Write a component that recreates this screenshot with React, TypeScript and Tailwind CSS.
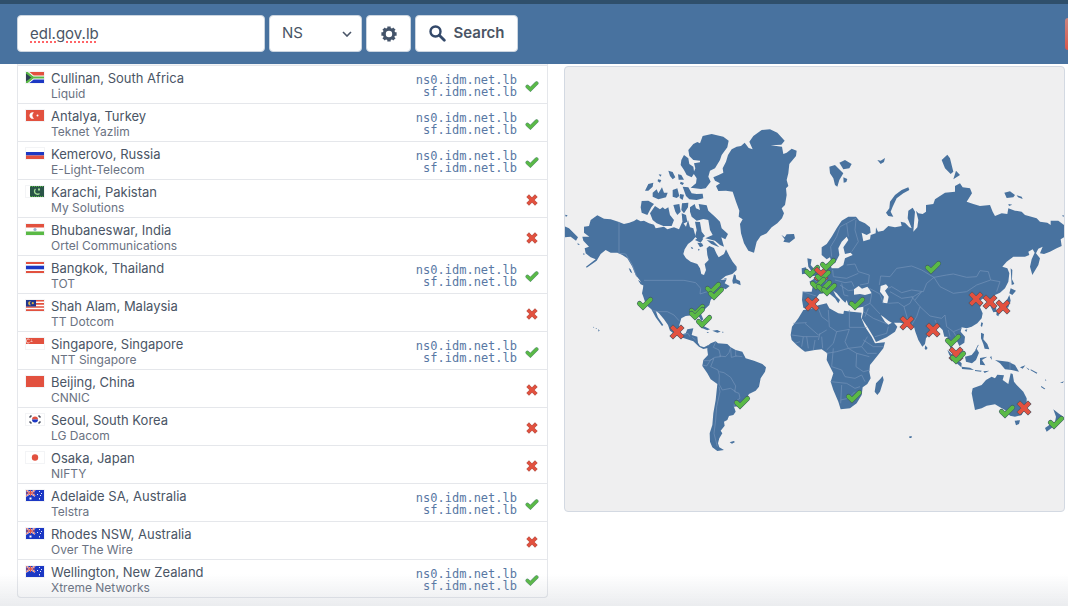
import { ReactNode } from "react";
import { clsx } from "clsx";

interface Server {
  place: string;
  provider: string;
  flag: string;
  ok: boolean;
}

const servers: Server[] = [
  { place: "Cullinan, South Africa", provider: "Liquid", flag: "za", ok: true },
  { place: "Antalya, Turkey", provider: "Teknet Yazlim", flag: "tr", ok: true },
  { place: "Kemerovo, Russia", provider: "E-Light-Telecom", flag: "ru", ok: true },
  { place: "Karachi, Pakistan", provider: "My Solutions", flag: "pk", ok: false },
  { place: "Bhubaneswar, India", provider: "Ortel Communications", flag: "in", ok: false },
  { place: "Bangkok, Thailand", provider: "TOT", flag: "th", ok: true },
  { place: "Shah Alam, Malaysia", provider: "TT Dotcom", flag: "my", ok: false },
  { place: "Singapore, Singapore", provider: "NTT Singapore", flag: "sg", ok: true },
  { place: "Beijing, China", provider: "CNNIC", flag: "cn", ok: false },
  { place: "Seoul, South Korea", provider: "LG Dacom", flag: "kr", ok: false },
  { place: "Osaka, Japan", provider: "NIFTY", flag: "jp", ok: false },
  { place: "Adelaide SA, Australia", provider: "Telstra", flag: "au", ok: true },
  { place: "Rhodes NSW, Australia", provider: "Over The Wire", flag: "au", ok: false },
  { place: "Wellington, New Zealand", provider: "Xtreme Networks", flag: "nz", ok: true },
];

// x, y, resolved
const markers: [number, number, boolean][] = [
  [645, 303, true],
  [713, 288, true],
  [716, 293, true],
  [697, 310, true],
  [697, 313, true],
  [704, 321, true],
  [677, 332, false],
  [742, 402, true],
  [812, 271, true],
  [821, 274, false],
  [828, 264, true],
  [823, 276, true],
  [818, 283, true],
  [824, 286, true],
  [829, 289, true],
  [812, 304, false],
  [857, 303, true],
  [854, 396, true],
  [933, 267, true],
  [976, 299, false],
  [990, 302, false],
  [1003, 307, false],
  [907, 323, false],
  [933, 330, false],
  [953, 340, true],
  [956, 354, false],
  [958, 357, true],
  [1007, 411, true],
  [1024, 408, false],
  [1056, 422, true],
];

const RED = "#e2513f";
const BLUE = "#1c38c4";
const GREEN = "#5ab946";

const unionJack = (
  <>
    <path d="M0 0L9 6M9 0L0 6" stroke="#fff" strokeWidth="1.6" />
    <path d="M0 0L9 6M9 0L0 6M4.5 0V6M0 3H9" stroke={RED} strokeWidth="0.9" />
  </>
);

const southernCross = (
  <g fill="#e8ecf8">
    <rect x="13" y="1" width="1" height="1" />
    <rect x="11" y="4" width="1" height="1" />
    <rect x="15" y="3" width="1" height="1" />
    <rect x="13" y="8" width="1" height="1.5" />
    <rect x="14" y="5" width="1" height="1" />
  </g>
);

const flags: Record<string, ReactNode> = {
  za: (
    <>
      <rect width="18" height="5" fill={RED} />
      <rect y="6.5" width="18" height="4.5" fill={BLUE} />
      <path d="M0 0L7 5.5H18M0 11L7 5.5" stroke="#fff" strokeWidth="4" fill="none" />
      <path d="M0 0V11L6 5.5Z" fill="#2f3f55" />
      <path d="M0 0L7 5.5H18M0 11L7 5.5" stroke={GREEN} strokeWidth="2.2" fill="none" />
    </>
  ),
  tr: (
    <>
      <rect width="18" height="11" fill={RED} />
      <path d="M8 2.6A3.2 3.2 0 1 0 8 8.4A3.4 3.4 0 0 1 8 2.6Z" fill="#fff" />
      <circle cx="11.5" cy="5.5" r="1" fill="#fff" />
    </>
  ),
  ru: (
    <>
      <rect y="4" width="18" height="3.5" fill={BLUE} />
      <rect y="7.5" width="18" height="3.5" fill={RED} />
    </>
  ),
  pk: (
    <>
      <rect x="4" width="14" height="11" fill="#2a5548" />
      <path d="M4 .5H18M4 10.5H18" stroke={GREEN} strokeDasharray="1 1" />
      <path d="M9.5 3A3 3 0 1 0 13.5 7.5" fill="none" stroke="#a5dc98" strokeWidth="1.3" />
      <rect x="12" y="2.5" width="2" height="2" fill="#a5dc98" />
    </>
  ),
  in: (
    <>
      <rect width="18" height="3.5" fill={RED} />
      <rect y="7.5" width="18" height="3.5" fill={GREEN} />
      <circle cx="9" cy="5.5" r="1.6" fill="#9fb0d0" />
    </>
  ),
  th: (
    <>
      <rect width="18" height="2" fill={RED} />
      <rect y="3.7" width="18" height="3.6" fill={BLUE} />
      <rect y="9" width="18" height="2" fill={RED} />
    </>
  ),
  my: (
    <>
      <path d="M0 .8H18M0 3.9H18M0 7H18M0 10.1H18" stroke={RED} strokeWidth="1.6" />
      <rect width="10" height="6.5" fill="#22378f" />
      <path d="M5 1.3A2.1 2.1 0 1 0 5 5.2A2.3 2.3 0 0 1 5 1.3Z" fill="#d8b04a" />
      <circle cx="6.8" cy="3.2" r="1.1" fill="#d8b04a" />
    </>
  ),
  sg: (
    <>
      <rect width="18" height="6" fill={RED} />
      <path d="M3.5 1.5A2 2 0 1 0 3.5 4.5" stroke="#fff" strokeWidth="0.7" fill="none" />
      <path d="M5 2H6M4.5 3.5H6.5" stroke="#fff" strokeWidth="0.6" />
    </>
  ),
  cn: <rect width="18" height="11" fill={RED} />,
  kr: (
    <>
      <path d="M6 5.5A3 3 0 0 1 12 5.5Z" fill={RED} />
      <path d="M6 5.5A3 3 0 0 0 12 5.5Z" fill={BLUE} />
      <path d="M3.5 3.5L5.5 1.5M12.5 1.5L14.5 3.5M3.5 7.5L5.5 9.5M12.5 9.5L14.5 7.5" stroke="#4a5060" strokeWidth="1.6" />
    </>
  ),
  jp: <circle cx="9" cy="5.5" r="3.2" fill={RED} />,
  au: (
    <>
      <rect width="18" height="11" fill={BLUE} />
      {unionJack}
      {southernCross}
      <rect x="3.5" y="7.5" width="2" height="2" fill="#fff" />
    </>
  ),
  nz: (
    <>
      <rect width="18" height="11" fill={BLUE} />
      {unionJack}
      {southernCross}
    </>
  ),
};

function Flag({ code }: { code: string }) {
  return (
    <svg viewBox="0 0 18 11" className="block h-[11px] w-[18px] bg-white outline outline-gray-100" aria-hidden="true">
      {flags[code]}
    </svg>
  );
}

function Mark({ ok }: { ok: boolean }) {
  const d = ok ? "M-5.5 0.5L-2 4L5.5 -3.5" : "M-4 -4L4 4M4 -4L-4 4";
  return (
    <g fill="none" strokeLinecap={ok ? "round" : "square"}>
      <path d={d} stroke="#3d5566" strokeWidth="5" />
      <path d={d} stroke={ok ? GREEN : RED} strokeWidth="4" />
    </g>
  );
}

function StatusIcon({ ok }: { ok: boolean }) {
  const d = ok ? "M-4.6 0.6L-1.6 3.4L4.6 -2.8" : "M-3 -3L3 3M3 -3L-3 3";
  return (
    <svg viewBox="-7 -6 14 12" className="block h-3 w-3.5" role="img" aria-label={ok ? "Resolved" : "Failed"}>
      <g fill="none" strokeLinecap={ok ? "round" : "square"}>
        <path d={d} stroke={ok ? "#5c8a7c" : "#b0594f"} strokeWidth="3.8" />
        <path d={d} stroke={ok ? GREEN : RED} strokeWidth="3" />
      </g>
    </svg>
  );
}

function WorldMap() {
  return (
    <svg viewBox="565 67 499 444" className="block w-full" role="img" aria-label="Propagation map">
      {/* Americas */}
      <g transform="translate(564 120) scale(0.33333)" fill="#48729f">
        <path d="M60 320L75 318L80 300L100 286L120 296L140 298L165 306L180 312L196 308L210 303L218 298L230 304L240 302L255 310L270 314L275 325L300 320L310 328L330 322L345 328L355 305L366 320L372 300L378 322L388 325L395 350L385 362L372 372L362 388L358 402L366 415L380 425L400 432L408 445L412 462L420 465L426 450L422 432L434 420L430 405L428 385L436 378L450 384L457 400L464 412L480 402L486 388L496 408L506 425L518 440L518 450L505 462L485 468L470 480L488 478L482 490L497 498L485 508L475 503L466 515L452 525L440 540L436 555L420 570L410 580L418 598L412 603L404 588L385 586L365 588L352 595L346 615L345 632L355 643L365 640L370 628L388 625L383 645L400 650L402 668L408 678L420 682L432 676L432 684L418 687L405 680L388 664L365 656L340 648L318 632L312 615L300 598L285 580L275 572L282 592L298 615L294 618L275 592L262 568L250 558L244 548L238 530L234 520L237 505L238 495L225 478L215 465L205 440L190 415L175 405L160 398L140 398L125 390L110 402L98 422L68 443L66 440L95 418L80 412L65 400L62 385L75 380L58 362L55 350L76 350L60 338Z" />
        <path d="M0 318L15 325L30 340L42 352L36 362L20 350L0 352ZM3 284L11 286L6 291ZM40 370l8 3l-6 2zM222 480l14 8l4 9l-10 -4zM194 444l6 4l5 12l-6 -4zM57 400l6 2l-4 3z" />
        <path d="M505 482L510 463L515 466L517 478L528 483L530 496L516 490L507 491ZM478 476l12 -2l-6 4zM380 380l8 4l-4 4zM400 368l14 2l4 8l-10 4zM402 386l6 3l-5 3z" />
        <g transform="translate(228 0)">
          <path d="M220 172L236 165L250 158L248 145L258 125L264 105L275 88L290 80L303 78L314 68L326 84L338 88L328 65L340 48L365 30L390 28L412 38L434 62L424 74L392 76L426 80L430 102L440 98L455 86L470 92L468 108L448 132L445 160L440 180L445 198L438 205L440 225L435 255L425 265L432 280L426 295L412 310L395 322L380 340L362 348L350 365L342 398L325 392L312 370L303 340L300 312L308 298L296 290L298 272L288 245L278 215L258 212L235 213L228 198L240 190L225 182Z" />
          <path d="M145 90L160 72L172 66L180 70L188 48L215 42L250 50L266 62L262 82L245 105L240 120L225 145L210 152L205 170L212 185L197 205L183 207L152 203L168 190L170 175L160 160L166 145L162 130L180 127L180 122L160 120L148 108Z" />
          <path d="M132 105L145 115L148 132L160 140L163 160L155 172L140 165L132 150L122 135L124 120Z" />
          <path d="M128 200L145 202L155 220L170 222L188 221L190 235L170 240L148 238L138 228ZM98 210L112 205L118 228L110 234L98 230ZM38 218L50 208L55 220L66 202L72 218L83 218L78 232L55 238L38 230ZM15 212L25 192L40 188L38 200L25 212ZM85 152L98 156L106 172L98 178L90 168ZM114 163l10 2l8 14l-16 0zM56 163l9 1l-4 6zM54 178l10 2l-4 8l-7 -4zM120 222l12 2l-4 16l-9 -6zM122 185l10 4l-4 6l-8 -4z" />
          <path d="M5 243L25 242L42 252L34 262L22 285L5 278L2 262ZM30 280L45 258L60 268L68 262L75 268L85 262L90 285L102 300L95 318L70 318L50 310L38 300ZM100 255L118 252L122 275L112 285L106 275ZM126 250L145 248L144 262L132 280L124 270ZM125 280L138 285L142 305L128 312Z" />
          <path d="M150 262L164 252L168 265L180 270L176 252L200 256L205 272L225 290L240 305L245 325L264 342L256 358L244 352L252 380L240 375L225 362L196 355L218 345L210 330L205 300L190 297L170 302L155 290L150 275ZM165 305L180 306L185 335L195 348L178 362L165 350L170 330ZM165 360L180 350L190 356L182 368ZM200 360L220 364L238 382L214 372Z" />
          <path d="M424 344L434 352L440 343L462 342L465 355L448 368L430 365L434 358Z" />
        </g>
        <g transform="translate(0 420)">
          <path d="M430 258L440 250L455 244L462 250L490 252L500 262L515 270L535 275L545 295L570 302L595 312L606 322L603 335L590 355L585 380L575 392L555 402L545 420L530 438L510 440L515 455L508 465L495 468L490 480L480 485L482 497L470 512L475 520L466 535L462 550L466 562L480 570L460 573L445 562L438 545L437 520L445 495L448 460L455 420L460 372L440 358L430 340L415 318L418 300L432 285L430 270Z" />
          <path d="M405 197L420 199L438 208L430 211L412 203ZM445 212l15 -2l10 5l-10 3zM474 215l6 1l-5 2zM428 216l8 1l-6 2zM497 547l12 -4l4 3l-9 5zM87 200l4 2l-3 1zM95 204l5 2l-4 1zM102 208l5 3l-3 4z" />
        </g>
        <g fill="none" stroke="#7694ba" strokeWidth="2">
          <path d="M165 306V400L185 402L205 435L218 470M240 481H360L395 488L410 505L408 522L430 515L448 500L470 485" />
          <path d="M265 572L285 575L310 575L330 585L345 602M355 645L372 640L378 650M385 652L395 660" />
          <path d="M455 666L448 682L465 690L470 710L452 712L440 720M465 708L485 710L495 698L500 682M418 722L435 722L450 715M450 715L440 740L462 750L466 765L465 792L475 810L500 805L515 815M466 755L480 758L500 772L515 798L512 815L525 820L528 835L512 845L510 860M465 800L468 815L458 860L455 900L450 940L460 980M515 690L515 708L535 710M500 685L502 712L518 708M415 735L428 738L440 720" />
        </g>
      </g>

      {/* Europe, Asia, Africa, Oceania */}
      <g transform="translate(780 140) scale(0.33333)" fill="#48729f">
        <path d="M125 345L125 322L140 312L155 290L170 265L185 242L205 230L228 230L238 242L255 250L270 262L272 278L260 285L245 278L250 304L270 298L272 285L287 280L288 262L294 275L310 272L325 258L345 262L365 258L362 245L375 248L388 262L395 265L383 235L385 212L398 203L405 215L402 250L400 275L412 262L415 240L408 212L415 220L428 222L438 215L438 195L460 192L465 178L495 158L525 155L525 138L540 130L548 142L570 145L576 160L560 185L580 192L600 198L630 195L638 215L645 228L665 220L682 222L685 205L705 212L725 215L735 225L770 235L780 245L802 248L812 255L812 242L835 242L852 255L852 292L842 298L845 318L830 325L810 335L792 342L780 340L788 320L775 326L768 340L780 355L775 375L757 405L750 380L755 358L764 338L758 328L745 335L748 345L735 350L700 350L680 365L667 380L682 385L688 400L685 425L675 445L660 458L645 465L635 480L648 500L650 515L640 517L632 500L622 482L610 475L600 482L592 480L595 492L606 492L600 502L608 520L605 535L592 550L575 560L560 565L545 562L542 575L555 590L553 608L538 618L532 605L520 595L512 605L515 622L530 640L532 655L515 635L508 615L502 590L493 590L488 570L478 560L465 565L450 580L438 595L435 612L427 620L415 600L406 575L402 560L390 555L360 548L335 548L325 542L310 530L302 525L315 545L325 554L340 546L352 560L345 575L320 592L288 606L280 590L262 560L245 535L250 515L250 500L225 505L205 495L200 480L205 470L196 488L185 478L170 460L160 452L168 468L180 480L175 490L165 475L145 458L130 460L118 462L108 475L106 498L85 508L70 503L66 480L68 455L95 455L98 440L88 425L105 415L120 405L135 390L140 370L150 372L155 385L175 385L190 375L195 355L218 345L212 338L195 342L190 322L205 300L200 290L185 305L175 325L178 345L165 370L155 368L150 352L140 358Z" />
        <path fill="#efeff0" d="M222 448L236 438L246 446L262 440L268 448L275 460L255 465L240 462L222 464ZM302 438L318 433L325 441L315 452L326 470L322 490L308 488L312 470L300 455Z" />
        <path d="M82 355L95 358L92 375L105 390L118 405L88 410L96 396L85 380ZM65 385L78 382L82 400L66 403ZM148 80L165 75L180 90L190 100L178 120L172 140L165 135L160 115L150 100ZM178 68L195 60L215 72L208 85L190 88ZM190 112l12 5l-3 9l-8 2zM292 60L302 62L315 54L312 66L302 72ZM385 142L388 150L370 160L350 175L338 200L332 215L340 230L325 228L318 218L328 205L330 185L345 165L365 150Z" />
        <g transform="translate(330 30)">
          <path d="M155 30L172 14L180 25L190 65L182 72L165 55ZM198 62L210 75L190 88ZM343 128L360 124L375 135L370 142L350 144ZM380 136l15 4l3 7l-14 -5zM355 162l12 2l-10 4zM516 197l5 -2l0 6zM362 355L367 360L366 388L373 402L365 405Z" />
        </g>
        <g transform="translate(0 420)">
          <path d="M70 90L90 88L115 76L140 70L148 85L175 100L190 102L192 92L215 95L245 98L243 112L255 140L275 170L285 190L315 187L310 205L290 230L270 255L268 275L272 295L262 312L248 322L245 345L230 370L210 385L182 388L175 365L160 330L152 305L160 280L150 260L140 240L142 220L125 208L105 210L75 215L65 208L50 195L35 180L32 165L36 140L55 115Z" />
          <path d="M308 288L311 300L300 335L292 345L284 335L288 310L300 298Z" />
        </g>
        <g transform="translate(360 390)">
          <path d="M332 55L348 62L337 75L328 70ZM328 75L332 92L325 112L300 125L290 122L315 102ZM290 125l8 4l-3 10l-6 -4zM244 157l5 2l-3 12l-4 -4zM194 180l8 -2l-3 8zM76 226l7 8l-5 6l-4 -4zM243 188L252 192L250 208L262 222L268 238L254 236L250 222L243 205ZM236 225l-8 16l-2 -1l8 -16z" />
          <path d="M142 240L165 262L185 280L184 292L165 275L148 255ZM185 290L210 293L222 300L186 297ZM195 260L215 255L230 236L237 248L228 270L216 280L198 275ZM240 264L262 260L246 270L256 286L240 284ZM270 262l4 -4l2 12zM225 300l20 2l-2 3l-18 -2zM250 304l18 -2l-14 7zM285 270L300 272L325 275L345 285L357 305L335 300L315 298L300 280ZM360 292l16 -6l-8 10zM378 292l10 6l-2 2zM392 298l20 10l-2 3l-18 -10zM436 326l3 6l-3 0zM424 348l12 8l-3 2l-10 -7zM480 338l12 -4l-4 5z" />
          <path d="M218 355L245 345L258 330L275 320L285 325L292 314L312 316L308 330L325 342L332 310L338 312L342 335L350 345L370 365L380 385L380 405L365 435L345 440L330 437L315 420L300 412L285 403L260 407L245 415L225 420L220 395L215 370ZM344 452L360 451L357 462L348 466ZM460 418L475 430L490 440L478 455L465 455L468 440ZM462 455L470 462L450 478L440 485L435 474ZM28 499l8 0l-2 5l-6 0z" />
        </g>
        <g fill="none" stroke="#7694ba" strokeWidth="2">
          <path d="M155 350L152 320L170 290L180 260L200 250L228 235M200 250L205 290M228 240L225 270L235 305L215 335M200 375L225 372L235 395L268 405L265 430L240 435M158 390L160 410L200 415L235 400M165 420L195 428L215 425L222 440M180 435L205 452L222 450M105 420L125 440M68 455L108 468M140 405L138 435L165 440L160 452M185 430L192 465L205 468" />
          <path d="M298 435L302 408L330 410L350 385L395 378L425 390L462 412L440 430L430 455L395 450L365 458L335 440L325 445M462 412L500 405L520 402L560 412L590 410L600 392L625 395L632 420L660 425L650 455M462 412L480 440L520 460L560 455L590 435L632 420M268 445L300 462L310 490M275 462L270 490L250 500M270 490L300 522M325 490L355 488L372 500L385 545M330 455L365 475L400 470L390 490L372 500M400 470L425 455M395 470L420 500L410 530L395 555M420 500L450 528L485 535L495 525L500 560L520 575L545 565M425 455L405 480M250 515L280 535L322 552M285 590L320 580L325 560M465 540L475 562M505 570L510 590M520 575L535 600M265 505L255 530" />
          <path d="M80 548L40 550M75 550L115 585L140 570M115 505L125 530L145 545M145 510L148 560L170 575L208 568M208 510V562H260M170 575L160 610L140 630M208 568L195 605L205 625L245 620L262 590M35 585L70 590L115 590M70 590L65 620M105 600L100 630M125 590L128 625M140 640L170 635L205 625L230 640L268 650M160 625L155 680L185 690L195 710L225 715M230 640L228 680L250 695L270 690M250 600L280 620L310 620M245 620L262 640L290 640M152 725L200 730M185 735L182 790M200 730L225 745L240 740M182 780L205 775L225 755M225 715L245 705L255 725M690 665V690M45 610L60 605M80 590L85 625M115 600L120 580" />
        </g>
      </g>

      {markers.map(([x, y, ok], i) => (
        <g key={i} transform={`translate(${x} ${y})`}>
          <Mark ok={ok} />
        </g>
      ))}
    </svg>
  );
}

function SearchBar() {
  const box = "h-[37px] rounded border border-[#cbd5e0] bg-white text-[15px] text-gray-600";
  return (
    <header className="flex items-center border-t-4 border-[#2f4f6b] bg-[#48729f] pt-[11px] pb-3 pl-[17px]">
      <form className="flex gap-1" onSubmit={(e) => e.preventDefault()}>
        <input
          type="text"
          aria-label="Domain"
          defaultValue="edl.gov.lb"
          className={clsx(box, "w-[248px] px-3 underline decoration-red-400 decoration-dotted decoration-2 underline-offset-2")}
        />
        <div className="relative">
          <select aria-label="Record type" defaultValue="NS" className={clsx(box, "w-[93px] appearance-none px-3")}>
            <option>A</option>
            <option>MX</option>
            <option>NS</option>
            <option>TXT</option>
          </select>
          <svg viewBox="0 0 10 6" className="pointer-events-none absolute top-4 right-2.5 h-1.5 w-2.5" aria-hidden="true">
            <path d="M1 1L5 5L9 1" fill="none" stroke="#4a5568" strokeWidth="1.6" />
          </svg>
        </div>
        <button type="button" aria-label="Settings" className={clsx(box, "flex w-[45px] items-center justify-center")}>
          <svg viewBox="-8 -8 16 16" className="size-4" aria-hidden="true">
            <circle r="4.7" fill="none" stroke="#44546a" strokeWidth="3" />
            <g stroke="#44546a" strokeWidth="3.4">
              <path d="M0 -5V-7.6M0 5V7.6M5 0H7.6M-5 0H-7.6M3.6 -3.6L5.4 -5.4M-3.6 3.6L-5.4 5.4M3.6 3.6L5.4 5.4M-3.6 -3.6L-5.4 -5.4" />
            </g>
          </svg>
        </button>
        <button type="submit" className={clsx(box, "flex w-[103px] items-center justify-center gap-2 font-semibold")}>
          <svg viewBox="0 0 17 17" className="size-[17px]" aria-hidden="true">
            <circle cx="6.5" cy="6.5" r="5" fill="none" stroke="#34496a" strokeWidth="2.4" />
            <path d="M10.3 10.3L15.3 15.3" stroke="#34496a" strokeWidth="2.8" strokeLinecap="round" />
          </svg>
          Search
        </button>
      </form>
      <div className="ml-auto h-8 w-[3px] rounded-l bg-gradient-to-b from-[#c98480] to-[#d9564a]" />
    </header>
  );
}

export default function App() {
  return (
    <div className="min-h-screen bg-white font-['Inter',sans-serif] text-gray-600">
      <SearchBar />

      <main className="grid grid-cols-[531fr_501fr] items-start gap-4 pr-[3px] pb-2 pl-[17px]">
        <div className="rounded-b border-x border-b border-gray-200 bg-gray-100 pt-px">
          <table className="w-full border-separate border-spacing-0 rounded-b bg-white">
            <tbody>
              {servers.map((server) => (
                <tr key={server.place}>
                  <td className="w-[33px] border-t border-gray-200 pt-1.5 pl-2 align-top">
                    <Flag code={server.flag} />
                  </td>
                  <td className="border-t border-gray-200 pt-1 pb-px align-top">
                    <div className="text-[13px] leading-4">{server.place}</div>
                    <div className="text-xs leading-4 text-gray-500">{server.provider}</div>
                  </td>
                  <td className="border-t border-gray-200 pt-2 text-right align-top font-['DejaVu_Sans_Mono',monospace] text-xs leading-3 text-[#5878a4]">
                    {server.ok && (
                      <>
                        <div>ns0.idm.net.lb</div>
                        <div>sf.idm.net.lb</div>
                      </>
                    )}
                  </td>
                  <td className="w-[30px] border-t border-gray-200 pt-3.5 pl-2 align-top">
                    <StatusIcon ok={server.ok} />
                  </td>
                </tr>
              ))}
            </tbody>
          </table>
        </div>

        <div className="mt-0.5 overflow-hidden rounded border border-[#d3d9e2] bg-[#efeff0]">
          <WorldMap />
        </div>
      </main>

      <div className="pointer-events-none fixed inset-x-0 bottom-0 h-8 bg-gradient-to-t from-gray-400/20 to-transparent" />
    </div>
  );
}
